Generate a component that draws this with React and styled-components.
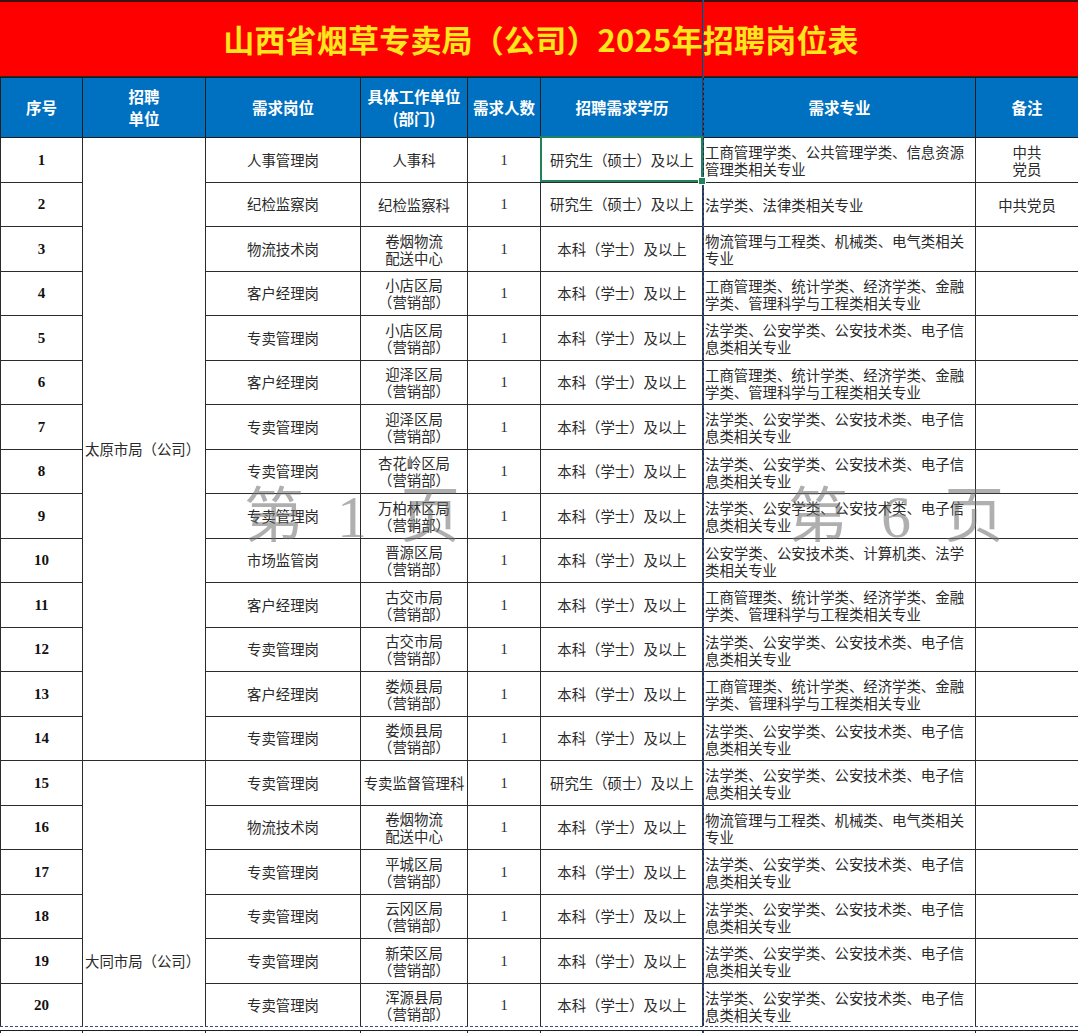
import React from "react";
import styled, { createGlobalStyle } from "styled-components";

const cjk = `"Noto Sans CJK SC", "Noto Sans", sans-serif`;
const serifNum = `"Liberation Serif", "Noto Sans CJK SC", serif`;

const LAW = ["法学类、公安学类、公安技术类、电子信", "息类相关专业"];
const BIZ = ["工商管理类、统计学类、经济学类、金融", "学类、管理科学与工程类相关专业"];
const LOGI = ["物流管理与工程类、机械类、电气类相关", "专业"];
const BACHELOR = "本科（学士）及以上";
const MASTER = "研究生（硕士）及以上";
const SALES = "（营销部）";

const rows = [
  { no: 1, post: "人事管理岗", dept: ["人事科"], edu: MASTER, major: ["工商管理学类、公共管理学类、信息资源", "管理类相关专业"], note: ["中共", "党员"] },
  { no: 2, post: "纪检监察岗", dept: ["纪检监察科"], edu: MASTER, major: ["法学类、法律类相关专业"], note: ["中共党员"] },
  { no: 3, post: "物流技术岗", dept: ["卷烟物流", "配送中心"], edu: BACHELOR, major: LOGI },
  { no: 4, post: "客户经理岗", dept: ["小店区局", SALES], edu: BACHELOR, major: BIZ },
  { no: 5, post: "专卖管理岗", dept: ["小店区局", SALES], edu: BACHELOR, major: LAW },
  { no: 6, post: "客户经理岗", dept: ["迎泽区局", SALES], edu: BACHELOR, major: BIZ },
  { no: 7, post: "专卖管理岗", dept: ["迎泽区局", SALES], edu: BACHELOR, major: LAW },
  { no: 8, post: "专卖管理岗", dept: ["杏花岭区局", SALES], edu: BACHELOR, major: LAW },
  { no: 9, post: "专卖管理岗", dept: ["万柏林区局", SALES], edu: BACHELOR, major: LAW },
  { no: 10, post: "市场监管岗", dept: ["晋源区局", SALES], edu: BACHELOR, major: ["公安学类、公安技术类、计算机类、法学", "类相关专业"] },
  { no: 11, post: "客户经理岗", dept: ["古交市局", SALES], edu: BACHELOR, major: BIZ },
  { no: 12, post: "专卖管理岗", dept: ["古交市局", SALES], edu: BACHELOR, major: LAW },
  { no: 13, post: "客户经理岗", dept: ["娄烦县局", SALES], edu: BACHELOR, major: BIZ },
  { no: 14, post: "专卖管理岗", dept: ["娄烦县局", SALES], edu: BACHELOR, major: LAW },
  { no: 15, post: "专卖管理岗", dept: ["专卖监督管理科"], edu: MASTER, major: LAW },
  { no: 16, post: "物流技术岗", dept: ["卷烟物流", "配送中心"], edu: BACHELOR, major: LOGI },
  { no: 17, post: "专卖管理岗", dept: ["平城区局", SALES], edu: BACHELOR, major: LAW },
  { no: 18, post: "专卖管理岗", dept: ["云冈区局", SALES], edu: BACHELOR, major: LAW },
  { no: 19, post: "专卖管理岗", dept: ["新荣区局", SALES], edu: BACHELOR, major: LAW },
  { no: 20, post: "专卖管理岗", dept: ["浑源县局", SALES], edu: BACHELOR, major: LAW },
  // rows below the page break: only their grid lines show in the frame
  { no: 21, blank: true },
  { no: 22, blank: true },
  { no: 23, blank: true },
];

const units = { 1: { name: "太原市局（公司）", span: 14 }, 15: { name: "大同市局（公司）", span: 9 } };

const widths = [82, 123, 155, 107, 73, 163, 272, 103];

const Lines = ({ items }) =>
  items.map((t, i) => (
    <React.Fragment key={i}>
      {i > 0 && <br />}
      {t}
    </React.Fragment>
  ));

const Row = ({ r }) => {
  const unit = units[r.no] && (
    <UnitCell rowSpan={units[r.no].span}>{units[r.no].name}</UnitCell>
  );
  if (r.blank) {
    return (
      <BodyRow>
        <NumCell />
        {unit}
        <Cell />
        <Cell />
        <CountCell />
        <Cell />
        <Cell />
        <Cell />
      </BodyRow>
    );
  }
  return (
    <BodyRow>
      <NumCell>{r.no}</NumCell>
      {unit}
      <Cell>{r.post}</Cell>
      <Cell $lh={17}>
        <Lines items={r.dept} />
      </Cell>
      <CountCell>1</CountCell>
      <Cell>{r.edu}</Cell>
      <Cell $align="left" $lh={17}>
        <Lines items={r.major} />
      </Cell>
      <Cell $lh={17}>{r.note ? <Lines items={r.note} /> : null}</Cell>
    </BodyRow>
  );
};

export default function App() {
  return (
    <>
      <GlobalStyle />
      <Sheet>
        <TitleBar>
          <Title>山西省烟草专卖局（公司）2025年招聘岗位表</Title>
        </TitleBar>
        <Table>
          <colgroup>
            {widths.map((w, i) => (
              <col key={i} style={{ width: w }} />
            ))}
          </colgroup>
          <thead>
            <HeadRow>
              <HeadCell>序号</HeadCell>
              <HeadCell>招聘<br />单位</HeadCell>
              <HeadCell>需求岗位</HeadCell>
              <HeadCell>具体工作单位<br />(部门)</HeadCell>
              <HeadCell>需求人数</HeadCell>
              <HeadCell>招聘需求学历</HeadCell>
              <HeadCell>需求专业</HeadCell>
              <HeadCell>备注</HeadCell>
            </HeadRow>
          </thead>
          <tbody>
            {rows.map((r) => (
              <Row key={r.no} r={r} />
            ))}
          </tbody>
        </Table>

        <PageBreakV />
        <PageBreakH />
        <SelectedCell>
          <FillHandle />
        </SelectedCell>
        <Watermark style={{ left: 244, top: 487 }}>
          <span>第</span>
          <Digit>1</Digit>
          <span>页</span>
        </Watermark>
        <Watermark style={{ left: 788, top: 487 }}>
          <span>第</span>
          <Digit>6</Digit>
          <span>页</span>
        </Watermark>
      </Sheet>
    </>
  );
}

const GlobalStyle = createGlobalStyle`
  html, body {
    margin: 0;
    padding: 0;
    background: #ffffff;
    height: 1033px;
    overflow: hidden;
  }
  body {
    font-family: ${cjk};
  }
`;

const Sheet = styled.div`
  position: relative;
  width: 1078px;
  height: 1033px;
  overflow: hidden;
`;

const TitleBar = styled.div`
  height: 77px;
  box-sizing: border-box;
  background: #ff0000;
  border-top: 2px solid #3b1212;
  border-bottom: 1px solid #2a2a2a;
  display: flex;
  align-items: center;
  justify-content: center;
`;

const Title = styled.h1`
  margin: 0 0 2px 0;
  font-family: ${cjk};
  font-size: 31px;
  font-weight: 700;
  color: #ffe61c;
  letter-spacing: 0.2px;
  padding-left: 4px;
`;

const Table = styled.table`
  border-collapse: collapse;
  table-layout: fixed;
  width: 1078px;
`;

const HeadRow = styled.tr`
  height: 60px;
`;

const HeadCell = styled.th`
  background: #0070c0;
  color: #ffffff;
  font-family: ${cjk};
  font-size: 15.5px;
  font-weight: 700;
  line-height: 22px;
  text-align: center;
  vertical-align: middle;
  padding: 0 2px 1px;
  border: 1px solid #1c1c1c;
`;

const BodyRow = styled.tr`
  height: 44.5px;
`;

const Cell = styled.td`
  border: 1px solid #2b2b2b;
  padding: 1px ${(p) => (p.$align === "left" ? "0 0 1px" : "2px")};
  text-align: ${(p) => p.$align || "center"};
  vertical-align: middle;
  font-family: ${cjk};
  font-size: 14.4px;
  line-height: ${(p) => (p.$lh ? `${p.$lh}px` : "20px")};
  color: #2a2a2a;
  white-space: nowrap;
  overflow: hidden;
`;

const NumCell = styled(Cell)`
  font-family: ${serifNum};
  font-weight: 700;
  font-size: 15px;
  color: #111;
`;

const CountCell = styled(Cell)`
  font-family: ${serifNum};
  font-size: 14.5px;
  color: #2a2a2a;
`;

const UnitCell = styled(Cell)`
  text-align: left;
  padding: 0 0 0 2px;
`;

const PageBreakV = styled.div`
  position: absolute;
  left: 702px;
  top: 0;
  bottom: 0;
  width: 0;
  border-left: 1px solid #2c3e63;
  border-right: 1px dashed #2f4f86;
  pointer-events: none;
`;

const PageBreakH = styled.div`
  position: absolute;
  left: 0;
  right: 0;
  top: 1026px;
  height: 3px;
  border-top: 1px dashed #2f4f86;
  border-bottom: 1px solid #1e1e1e;
  background: #ffffff;
  pointer-events: none;
`;

const SelectedCell = styled.div`
  position: absolute;
  left: 540px;
  top: 136px;
  width: 163px;
  height: 46px;
  box-sizing: border-box;
  border: 2px solid #21835c;
  pointer-events: none;
`;

const FillHandle = styled.div`
  position: absolute;
  right: -5px;
  bottom: -5px;
  width: 6px;
  height: 6px;
  background: #21835c;
  border: 1px solid #ffffff;
`;

const Watermark = styled.div`
  position: absolute;
  display: flex;
  gap: 33px;
  align-items: center;
  font-family: ${serifNum};
  font-size: 60px;
  line-height: 1;
  color: rgba(110, 110, 110, 0.55);
  pointer-events: none;
`;

const Digit = styled.span`
  width: 30px;
  text-align: center;
  font-weight: 400;
`;
